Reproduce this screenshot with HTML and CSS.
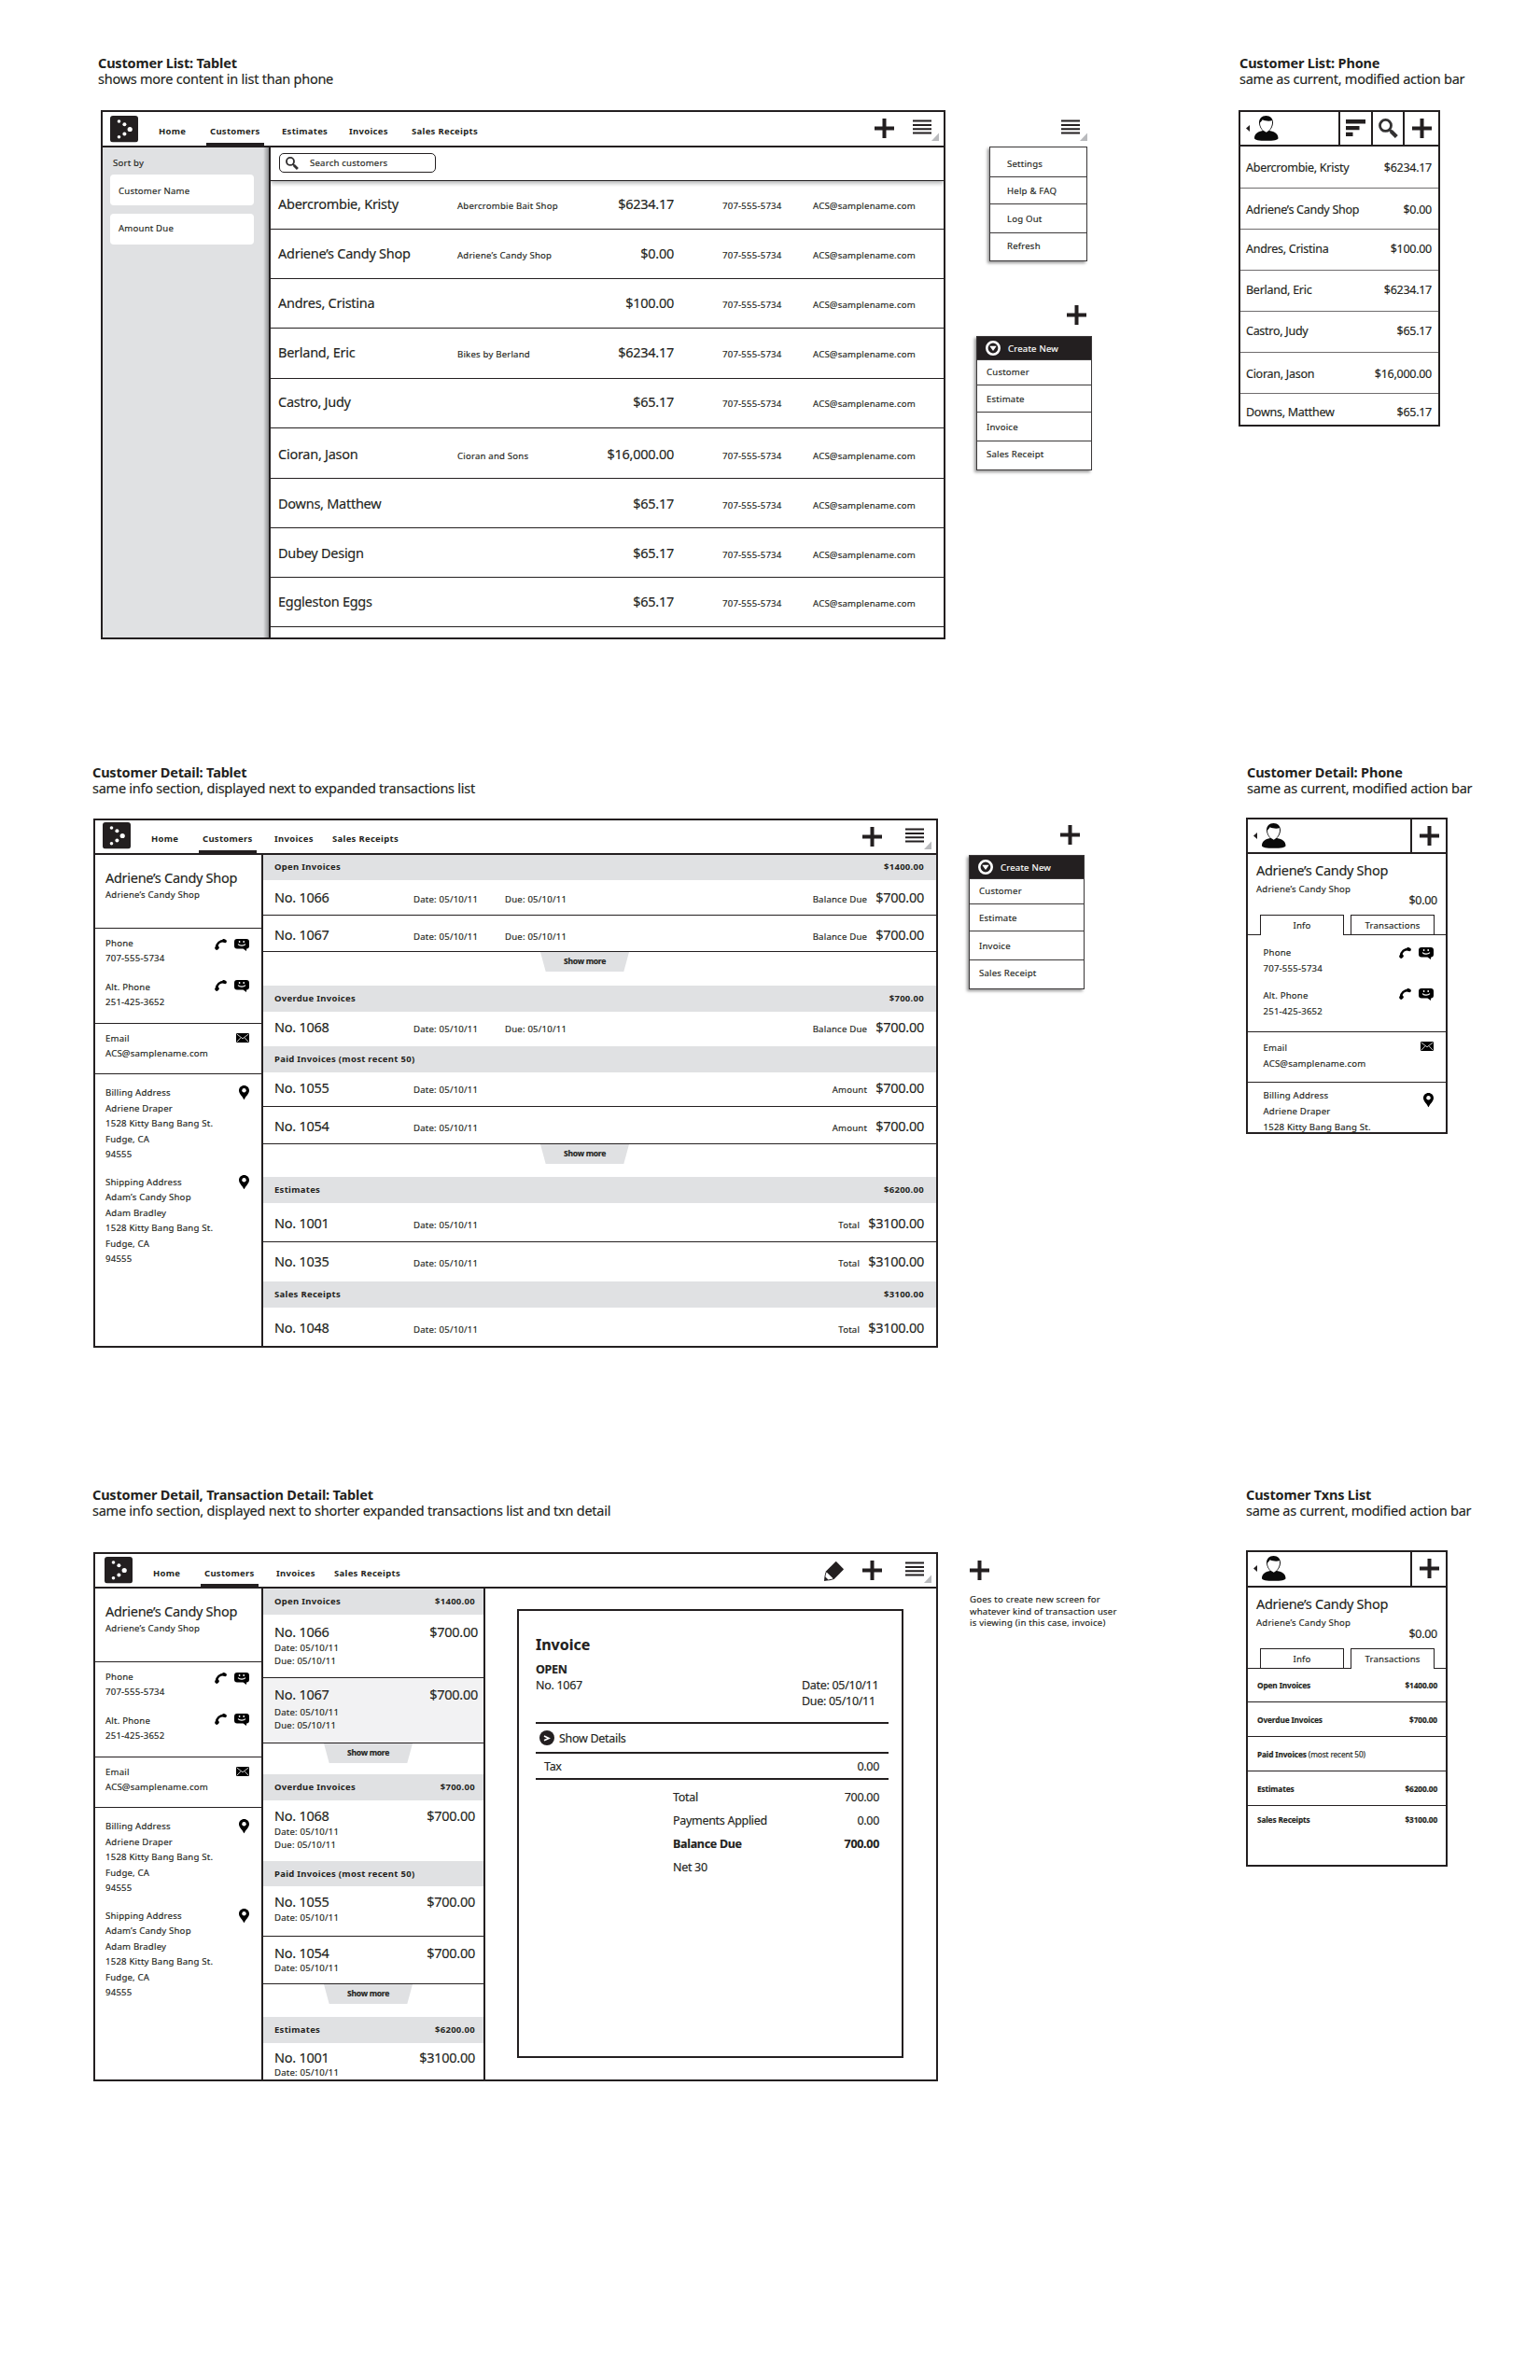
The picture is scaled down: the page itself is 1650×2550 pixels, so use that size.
FILE: index.html
```html
<!DOCTYPE html>
<html lang="en">
<head>
<meta charset="utf-8">
<title>Customer screens: tablet and phone</title>
<link rel="stylesheet" href="styles.css">
</head>
<body>
<svg class="sprite" aria-hidden="true">
  <symbol id="i-logo" viewBox="0 0 30 28.5"><rect width="30" height="28.5" rx="3" fill="#231f20"/><g fill="#fff"><circle cx="9.5" cy="6" r="1.8"/><circle cx="15.4" cy="9.3" r="2"/><circle cx="21.2" cy="14.5" r="2.6"/><circle cx="15.4" cy="19.6" r="2"/><circle cx="9.5" cy="22.7" r="1.8"/></g></symbol>
  <symbol id="i-plus" viewBox="0 0 21 21"><path d="M8.500 0h4v8.500H21v4h-8.500V21h-4v-8.500H0v-4h8.500z" fill="#231f20"/></symbol>
  <symbol id="i-list" viewBox="0 0 28 23"><path d="M0 .500h20v2H0zM0 4.900h20v2H0zM0 9.300h20v2H0zM0 13.600h20v2H0z" fill="#231f20"/><path d="M28 14.500V23h-8z" fill="#b9babd"/></symbol>
  <symbol id="i-search" viewBox="0 0 21 21"><circle cx="7.500" cy="7.400" r="6" fill="none" stroke="#333132" stroke-width="2.800"/><path d="M11.500 11.700l2.500 2.200" stroke="#333132" stroke-width="2.600"/><path d="M13.300 13.400l6 6" stroke="#333132" stroke-width="4.200"/></symbol>
  <symbol id="i-sort" viewBox="0 0 21 18"><path d="M0 0h21v4.500H0zM0 7h14.500v4.200H0zM0 13.700h7.500V18H0z" fill="#231f20"/></symbol>
  <symbol id="i-person" viewBox="0 0 26 27"><path d="M12.500 0C17 0 20 3 20 7.500c0 3.500-2 7-4 8.500 6 1 9.500 3.500 9.500 8 0 2-5 2.800-12.700 2.800S0 26 0 24c0-4.500 3.500-7 9-8-2-1.500-4-5-4-8.500C5 3 8 0 12.500 0z" fill="#0a0a0a"/><path d="M6 7.500C7.300 6.400 8.200 5.300 8.700 4.300c3 1.500 7 1.800 10.300 1 .5 4.400-1 8.200-3.400 10.400l-2.800 2-3.400-2C7.200 13.600 5.900 10.800 6 7.500z" fill="#fff"/></symbol>
  <symbol id="i-back" viewBox="0 0 4 7"><path d="M4 0v7L0 3.500z" fill="#231f20"/></symbol>
  <symbol id="i-call" viewBox="0 0 13 12"><path d="M2 9C2.300 4.800 5.500 2 10 1.900" fill="none" stroke="#000" stroke-width="2.500"/><ellipse cx="2.500" cy="9.500" rx="2.400" ry="2.100" transform="rotate(-50 2.500 9.500)"/><ellipse cx="10.400" cy="2.100" rx="2.500" ry="1.900" transform="rotate(25 10.400 2.100)"/></symbol>
  <symbol id="i-chat" viewBox="0 0 16 13"><path d="M3 0h10a3 3 0 0 1 3 3v4.500a3 3 0 0 1-2.800 3L13 13l-3.500-2.500H3a3 3 0 0 1-3-3V3a3 3 0 0 1 3-3z"/><circle cx="5.600" cy="3" r=".9" fill="#fff"/><circle cx="10.200" cy="3" r=".9" fill="#fff"/><path d="M4 5.700c2 2 6 2 8 0" fill="none" stroke="#fff" stroke-width="1.200"/></symbol>
  <symbol id="i-mail" viewBox="0 0 14 10"><rect width="14" height="10" rx="1.200"/><path d="M1 1.200l6 4.600 6-4.600M1 9l4-4.300M13 9L9 4.700" fill="none" stroke="#fff" stroke-width=".8"/></symbol>
  <symbol id="i-pin" viewBox="0 0 11 15.500"><path d="M5.500 0C2.400 0 0 2.400 0 5.400 0 9 4 11.500 5.500 15.500 7 11.500 11 9 11 5.400 11 2.400 8.600 0 5.500 0z"/><circle cx="5.500" cy="5.200" r="2.200" fill="#fff"/></symbol>
  <symbol id="i-pencil" viewBox="0 0 21 21"><path d="M12 .4q.7-.6 1.400.1l7.100 7.200q.6.700 0 1.400L10.600 19C8.800 19.900 4 20.500 0 21c.3-4 .8-8 2.200-10.700z" fill="#231f20"/><path d="M2.700 11.500l6.900 6.700c-1.800.8-3.600 1-5.200 1.200l-3-2.800c.2-2 .6-4 1.300-5.100z" fill="#fff"/></symbol>
  <symbol id="i-drop" viewBox="0 0 16 16"><circle cx="8" cy="8" r="6.700" fill="#231f20" stroke="#fff" stroke-width="2.600"/><path d="M4.300 5.800h7.400L8 11z" fill="#fff"/></symbol>
  <symbol id="i-expand" viewBox="0 0 16 16"><circle cx="8" cy="8" r="8" fill="#231f20"/><path d="M5 6l5 2.400-5 2.400" fill="none" stroke="#fff" stroke-width="1.700"/></symbol>
</svg>

<section class="board board--list">
  <div class="board__tablet">
    <h2 class="caption">Customer List: Tablet</h2>
    <p class="note">shows more content in list than phone</p>
    <div class="tablet tablet--list">
      <header class="topbar topbar--list">
        <svg class="topbar__logo"><use href="#i-logo"/></svg>
        <nav class="nav"><a class="nav__home">Home</a><a class="nav__customers">Customers</a><a class="nav__estimates">Estimates</a><a class="nav__invoices">Invoices</a><a>Sales Receipts</a></nav>
        <svg class="plus"><use href="#i-plus"/></svg>
        <svg class="list-icon"><use href="#i-list"/></svg>
      </header>
      <div class="tablet__body">
        <aside class="sort">
          <p class="sort__title">Sort by</p>
          <div class="sort__option">Customer Name</div>
          <div class="sort__option">Amount Due</div>
        </aside>
        <main class="customers">
          <div class="search"><div class="search__box"><svg class="search__icon"><use href="#i-search"/></svg>Search customers</div></div>
          <div class="customer"><b>Abercrombie, Kristy</b><span>Abercrombie Bait Shop</span><i>$6234.17</i><span>707-555-5734</span><span>ACS@samplename.com</span></div>
          <div class="customer"><b>Adriene’s Candy Shop</b><span>Adriene’s Candy Shop</span><i>$0.00</i><span>707-555-5734</span><span>ACS@samplename.com</span></div>
          <div class="customer"><b>Andres, Cristina</b><span></span><i>$100.00</i><span>707-555-5734</span><span>ACS@samplename.com</span></div>
          <div class="customer"><b>Berland, Eric</b><span>Bikes by Berland</span><i>$6234.17</i><span>707-555-5734</span><span>ACS@samplename.com</span></div>
          <div class="customer"><b>Castro, Judy</b><span></span><i>$65.17</i><span>707-555-5734</span><span>ACS@samplename.com</span></div>
          <div class="customer"><b>Cioran, Jason</b><span>Cioran and Sons</span><i>$16,000.00</i><span>707-555-5734</span><span>ACS@samplename.com</span></div>
          <div class="customer"><b>Downs, Matthew</b><span></span><i>$65.17</i><span>707-555-5734</span><span>ACS@samplename.com</span></div>
          <div class="customer"><b>Dubey Design</b><span></span><i>$65.17</i><span>707-555-5734</span><span>ACS@samplename.com</span></div>
          <div class="customer"><b>Eggleston Eggs</b><span></span><i>$65.17</i><span>707-555-5734</span><span>ACS@samplename.com</span></div>
        </main>
      </div>
    </div>
  </div>
  <div class="extras extras--list">
    <svg class="list-icon"><use href="#i-list"/></svg>
    <ul class="menu menu--settings"><li>Settings</li><li>Help &amp; FAQ</li><li>Log Out</li><li>Refresh</li></ul>
    <svg class="plus"><use href="#i-plus"/></svg>
    <ul class="menu menu--create"><li class="menu__head"><svg class="round"><use href="#i-drop"/></svg>Create New</li><li>Customer</li><li>Estimate</li><li>Invoice</li><li>Sales Receipt</li></ul>
  </div>
  <div class="board__phone">
    <h2 class="caption">Customer List: Phone</h2>
    <p class="note">same as current, modified action bar</p>
    <div class="phone">
      <header class="actionbar">
        <svg class="back"><use href="#i-back"/></svg><svg class="person"><use href="#i-person"/></svg>
        <span class="action action--sort"><svg><use href="#i-sort"/></svg></span>
        <span class="action action--search"><svg><use href="#i-search"/></svg></span>
        <span class="action action--add"><svg><use href="#i-plus"/></svg></span>
      </header>
      <div class="contacts">
        <div class="contact"><span>Abercrombie, Kristy</span><span>$6234.17</span></div>
        <div class="contact"><span>Adriene’s Candy Shop</span><span>$0.00</span></div>
        <div class="contact"><span>Andres, Cristina</span><span>$100.00</span></div>
        <div class="contact"><span>Berland, Eric</span><span>$6234.17</span></div>
        <div class="contact"><span>Castro, Judy</span><span>$65.17</span></div>
        <div class="contact"><span>Cioran, Jason</span><span>$16,000.00</span></div>
        <div class="contact"><span>Downs, Matthew</span><span>$65.17</span></div>
      </div>
    </div>
  </div>
</section>

<section class="board board--detail">
  <div class="board__tablet">
    <h2 class="caption">Customer Detail: Tablet</h2>
    <p class="note">same info section, displayed next to expanded transactions list</p>
    <div class="tablet tablet--detail">
      <header class="topbar topbar--detail">
        <svg class="topbar__logo"><use href="#i-logo"/></svg>
        <nav class="nav"><a class="nav__home">Home</a><a class="nav__customers">Customers</a><a class="nav__invoices">Invoices</a><a>Sales Receipts</a></nav>
        <svg class="plus"><use href="#i-plus"/></svg>
        <svg class="list-icon"><use href="#i-list"/></svg>
      </header>
      <div class="tablet__body">
        <aside class="info">
          <div class="info__head"><h3>Adriene’s Candy Shop</h3><p>Adriene’s Candy Shop</p></div>
          <div class="info__phones">
            <div class="entry"><p>Phone<br>707-555-5734</p><svg class="call"><use href="#i-call"/></svg><svg class="chat"><use href="#i-chat"/></svg></div>
            <div class="entry"><p>Alt. Phone<br>251-425-3652</p><svg class="call"><use href="#i-call"/></svg><svg class="chat"><use href="#i-chat"/></svg></div>
          </div>
          <div class="info__email">
            <div class="entry"><p>Email<br>ACS@samplename.com</p><svg class="mail"><use href="#i-mail"/></svg></div>
          </div>
          <div class="info__address">
            <div class="entry"><p>Billing Address<br>Adriene Draper<br>1528 Kitty Bang Bang St.<br>Fudge, CA<br>94555</p><svg class="pin"><use href="#i-pin"/></svg></div>
            <div class="entry"><p>Shipping Address<br>Adam’s Candy Shop<br>Adam Bradley<br>1528 Kitty Bang Bang St.<br>Fudge, CA<br>94555</p><svg class="pin"><use href="#i-pin"/></svg></div>
          </div>
        </aside>
        <main class="ledger ledger--wide">
          <div class="group"><span>Open Invoices</span><span>$1400.00</span></div>
          <div class="txn"><b>No. 1066</b><span>Date: 05/10/11</span><span>Due: 05/10/11</span><span>Balance Due</span><b>$700.00</b></div>
          <div class="txn txn--low"><b>No. 1067</b><span>Date: 05/10/11</span><span>Due: 05/10/11</span><span>Balance Due</span><b>$700.00</b></div>
          <div class="more"><span>Show more</span></div>
          <div class="group"><span>Overdue Invoices</span><span>$700.00</span></div>
          <div class="txn txn--last txn--high"><b>No. 1068</b><span>Date: 05/10/11</span><span>Due: 05/10/11</span><span>Balance Due</span><b>$700.00</b></div>
          <div class="group"><span>Paid Invoices (most recent 50)</span></div>
          <div class="txn txn--high"><b>No. 1055</b><span>Date: 05/10/11</span><span></span><span>Amount</span><b>$700.00</b></div>
          <div class="txn txn--low"><b>No. 1054</b><span>Date: 05/10/11</span><span></span><span>Amount</span><b>$700.00</b></div>
          <div class="more"><span>Show more</span></div>
          <div class="group"><span>Estimates</span><span>$6200.00</span></div>
          <div class="txn txn--lower"><b>No. 1001</b><span>Date: 05/10/11</span><span></span><span>Total</span><b>$3100.00</b></div>
          <div class="txn txn--last txn--low"><b>No. 1035</b><span>Date: 05/10/11</span><span></span><span>Total</span><b>$3100.00</b></div>
          <div class="group"><span>Sales Receipts</span><span>$3100.00</span></div>
          <div class="txn txn--last txn--lower"><b>No. 1048</b><span>Date: 05/10/11</span><span></span><span>Total</span><b>$3100.00</b></div>
        </main>
      </div>
    </div>
  </div>
  <div class="extras extras--detail">
    <svg class="plus"><use href="#i-plus"/></svg>
    <ul class="menu menu--create"><li class="menu__head"><svg class="round"><use href="#i-drop"/></svg>Create New</li><li>Customer</li><li>Estimate</li><li>Invoice</li><li>Sales Receipt</li></ul>
  </div>
  <div class="board__phone">
    <h2 class="caption">Customer Detail: Phone</h2>
    <p class="note">same as current, modified action bar</p>
    <div class="phone">
      <header class="actionbar actionbar--tall">
        <svg class="back"><use href="#i-back"/></svg><svg class="person"><use href="#i-person"/></svg>
        <span class="action action--add"><svg><use href="#i-plus"/></svg></span>
      </header>
      <div class="profile"><h3>Adriene’s Candy Shop</h3><p>Adriene’s Candy Shop</p><p class="profile__due">$0.00</p></div>
      <div class="tabs"><span class="tab tab--active">Info</span><span class="tab">Transactions</span></div>
      <div class="details">
        <div class="details__phones">
          <div class="entry"><p>Phone<br>707-555-5734</p><svg class="call"><use href="#i-call"/></svg><svg class="chat"><use href="#i-chat"/></svg></div>
          <div class="entry"><p>Alt. Phone<br>251-425-3652</p><svg class="call"><use href="#i-call"/></svg><svg class="chat"><use href="#i-chat"/></svg></div>
        </div>
        <div class="details__email">
          <div class="entry"><p>Email<br>ACS@samplename.com</p><svg class="mail"><use href="#i-mail"/></svg></div>
        </div>
        <div class="details__address">
          <div class="entry"><p>Billing Address<br>Adriene Draper<br>1528 Kitty Bang Bang St.</p><svg class="pin"><use href="#i-pin"/></svg></div>
        </div>
      </div>
    </div>
  </div>
</section>

<section class="board board--txn">
  <div class="board__tablet">
    <h2 class="caption">Customer Detail, Transaction Detail: Tablet</h2>
    <p class="note">same info section, displayed next to shorter expanded transactions list and txn detail</p>
    <div class="tablet tablet--txn">
      <header class="topbar topbar--txn">
        <svg class="topbar__logo"><use href="#i-logo"/></svg>
        <nav class="nav"><a class="nav__home">Home</a><a class="nav__customers">Customers</a><a class="nav__invoices">Invoices</a><a>Sales Receipts</a></nav>
        <svg class="pencil"><use href="#i-pencil"/></svg>
        <svg class="plus"><use href="#i-plus"/></svg>
        <svg class="list-icon"><use href="#i-list"/></svg>
      </header>
      <div class="tablet__body">
        <aside class="info">
          <div class="info__head"><h3>Adriene’s Candy Shop</h3><p>Adriene’s Candy Shop</p></div>
          <div class="info__phones">
            <div class="entry"><p>Phone<br>707-555-5734</p><svg class="call"><use href="#i-call"/></svg><svg class="chat"><use href="#i-chat"/></svg></div>
            <div class="entry"><p>Alt. Phone<br>251-425-3652</p><svg class="call"><use href="#i-call"/></svg><svg class="chat"><use href="#i-chat"/></svg></div>
          </div>
          <div class="info__email">
            <div class="entry"><p>Email<br>ACS@samplename.com</p><svg class="mail"><use href="#i-mail"/></svg></div>
          </div>
          <div class="info__address">
            <div class="entry"><p>Billing Address<br>Adriene Draper<br>1528 Kitty Bang Bang St.<br>Fudge, CA<br>94555</p><svg class="pin"><use href="#i-pin"/></svg></div>
            <div class="entry"><p>Shipping Address<br>Adam’s Candy Shop<br>Adam Bradley<br>1528 Kitty Bang Bang St.<br>Fudge, CA<br>94555</p><svg class="pin"><use href="#i-pin"/></svg></div>
          </div>
        </aside>
        <div class="ledger ledger--narrow">
          <div class="group"><span>Open Invoices</span><span>$1400.00</span></div>
          <div class="item item--open item--first"><b>No. 1066</b><b>$700.00</b><p>Date: 05/10/11<br>Due: 05/10/11</p></div>
          <div class="item item--open item--selected"><b>No. 1067</b><b>$700.00</b><p>Date: 05/10/11<br>Due: 05/10/11</p></div>
          <div class="more"><span>Show more</span></div>
          <div class="group"><span>Overdue Invoices</span><span>$700.00</span></div>
          <div class="item item--last"><b>No. 1068</b><b>$700.00</b><p>Date: 05/10/11<br>Due: 05/10/11</p></div>
          <div class="group"><span>Paid Invoices (most recent 50)</span></div>
          <div class="item"><b>No. 1055</b><b>$700.00</b><p>Date: 05/10/11</p></div>
          <div class="item item--low"><b>No. 1054</b><b>$700.00</b><p>Date: 05/10/11</p></div>
          <div class="more"><span>Show more</span></div>
          <div class="group"><span>Estimates</span><span>$6200.00</span></div>
          <div class="item item--last item--cut"><b>No. 1001</b><b>$3100.00</b><p>Date: 05/10/11</p></div>
        </div>
        <main class="pane">
          <article class="invoice">
            <h3>Invoice</h3>
            <div class="invoice__meta"><p><strong>OPEN</strong><br>No. 1067</p><p class="invoice__dates">Date: 05/10/11<br>Due: 05/10/11</p></div>
            <div class="invoice__details"><svg class="round"><use href="#i-expand"/></svg>Show Details</div>
            <div class="invoice__tax"><span>Tax</span><span>0.00</span></div>
            <dl class="totals">
              <div><dt>Total</dt><dd>700.00</dd></div>
              <div><dt>Payments Applied</dt><dd>0.00</dd></div>
              <div class="totals__due"><dt>Balance Due</dt><dd>700.00</dd></div>
              <div><dt>Net 30</dt></div>
            </dl>
          </article>
        </main>
      </div>
    </div>
  </div>
  <div class="extras extras--txn">
    <svg class="plus"><use href="#i-plus"/></svg>
    <p>Goes to create new screen for<br>whatever kind of transaction user<br>is viewing (in this case, invoice)</p>
  </div>
  <div class="board__phone">
    <h2 class="caption">Customer Txns List</h2>
    <p class="note">same as current, modified action bar</p>
    <div class="phone">
      <header class="actionbar actionbar--tall">
        <svg class="back"><use href="#i-back"/></svg><svg class="person"><use href="#i-person"/></svg>
        <span class="action action--add"><svg><use href="#i-plus"/></svg></span>
      </header>
      <div class="profile"><h3>Adriene’s Candy Shop</h3><p>Adriene’s Candy Shop</p><p class="profile__due">$0.00</p></div>
      <div class="tabs"><span class="tab">Info</span><span class="tab tab--active">Transactions</span></div>
      <div class="sums">
        <div class="sum"><b>Open Invoices</b><b>$1400.00</b></div>
        <div class="sum"><b>Overdue Invoices</b><b>$700.00</b></div>
        <div class="sum"><span><b>Paid Invoices</b> (most recent 50)</span></div>
        <div class="sum"><b>Estimates</b><b>$6200.00</b></div>
        <div class="sum"><b>Sales Receipts</b><b>$3100.00</b></div>
      </div>
    </div>
  </div>
</section>
</body>
</html>
```
FILE: styles.css
```css
* { box-sizing: border-box; }

body {
  margin: 0;
  width: 1650px;
  height: 2550px;
  overflow: hidden;
  background: #fff;
  color: #231f20;
  font: 9.6px/13px "Noto Sans", "Open Sans", sans-serif;
  letter-spacing: 0.2px;
  -webkit-text-stroke: 0.15px currentColor;
}

h2, h3, p, ul, dl, dd { margin: 0; padding: 0; }
ul { list-style: none; }
svg { display: block; flex: none; }
.sprite { position: absolute; width: 0; height: 0; }

/* Boards: one row per feature, tablet + menus + phone */
.board { display: flex; }
.board--list { height: 760px; padding-left: 105px; }
.board--detail { height: 774px; padding-left: 99px; }
.board--txn { height: 1016px; padding-left: 99px; }
.board__tablet { padding-top: 59px; width: 941px; }
.board--detail .board__tablet, .board--txn .board__tablet { width: 940px; }
.board__phone { padding-top: 59px; }
.board--list .board__phone { margin-left: 158px; }
.board--detail .board__phone { margin-left: 174px; }
.board--txn .board__phone { margin-left: 135px; }

.caption { font-size: 14.5px; line-height: 17px; letter-spacing: -0.18px; -webkit-text-stroke: 0; }
.note { font-size: 14.5px; line-height: 17px; letter-spacing: -0.25px; white-space: nowrap; }

/* Tablet frame */
.tablet { display: flex; flex-direction: column; width: 905px; height: 567px; border: 2px solid #231f20; overflow: hidden; }
.tablet--list { margin: 25px 0 0 3px; }
.tablet--detail { margin: 24px 0 0 1px; }
.tablet--txn { margin: 36px 0 0 1px; }
.tablet__body { display: flex; flex: 1; min-height: 0; }

.topbar { display: flex; flex: none; height: 37px; padding-left: 8px; border-bottom: 2px solid #231f20; }
.topbar--list { height: 38px; }
.topbar--txn { padding-left: 10px; }
.topbar__logo { width: 30px; height: 28.5px; margin-top: 4px; }
.topbar--detail .topbar__logo { margin-top: 2px; }
.topbar--txn .topbar__logo { margin-top: 3px; }
.nav { display: flex; flex: 1; padding-left: 22px; font-size: 9.5px; font-weight: bold; letter-spacing: 0.29px; -webkit-text-stroke: 0; }
.nav a { padding-top: 14px; }
.topbar--detail .nav a { padding-top: 13px; }
.nav__home { width: 55px; }
.nav__customers { position: relative; width: 77px; }
.nav__customers::after { content: ""; position: absolute; left: -4px; bottom: 0; width: 62px; height: 3px; background: #231f20; }
.nav__estimates { width: 72px; }
.nav__invoices { width: 67px; }
.topbar--detail .nav__invoices, .topbar--txn .nav__invoices { width: 62px; }
.plus { width: 21px; height: 21px; }
.list-icon { width: 28px; height: 23px; }
.pencil { width: 21px; height: 21px; margin: 8px 20px 0 0; }
.topbar .plus { margin: 7px 20px 0 0; }
.topbar .list-icon { margin: 8px 5px 0 0; }
.topbar--detail .plus { margin-right: 25px; }
.topbar--txn .plus { margin-right: 25px; }

/* Customer list, tablet */
.sort { width: 180px; padding: 10px 16px 0 8px; border-right: 2px solid #231f20; background: linear-gradient(to right, transparent 172px, #8f9092 178px), #e0e1e3; }
.sort__title { padding-left: 3px; }
.sort__option { height: 33px; margin-top: 6px; padding: 11px 9px 0; border-radius: 4px; background: #fff; }
.sort__option + .sort__option { margin-top: 9px; padding-top: 9px; }
.customers { flex: 1; display: grid; grid-template-rows: 36px 52px 53px 53px 54px 53px 54px 53px 53px 53px; }
.search { padding: 6px 0 0 9px; border-bottom: 1px solid #231f20; box-shadow: 0 2px 5px #a9aaac; clip-path: inset(0 0 -6px 0); }
.search__box { display: flex; align-items: center; width: 168px; height: 21px; border: 1px solid #231f20; border-radius: 5px; padding-left: 6px; }
.search__icon { width: 14px; height: 14px; margin-right: 12px; }
.customer { display: grid; grid-template-columns: 192px 140px 92px 149px 1fr; align-items: baseline; align-content: start; padding: 15px 0 0 8px; border-bottom: 1px solid #231f20; }
.customer:nth-child(2) { padding-top: 14px; }
.customer:nth-child(6) { padding-top: 14px; }
.customer:nth-child(7) { padding-top: 17px; }
.customer:nth-child(8), .customer:nth-child(9) { padding-top: 16px; }
.customer b, .customer i { font-size: 14.5px; line-height: 20px; font-weight: normal; font-style: normal; letter-spacing: -0.26px; }
.customer i { text-align: right; }
.customer i + span { padding-left: 52px; }

/* Pop-up menus beside the tablets */
.extras { display: flex; flex-direction: column; align-items: flex-end; }
.extras--list { width: 124px; padding-top: 128px; }
.extras--list .list-icon { margin-right: 5px; }
.extras--list .plus { margin: 47px 6px 12px 0; }
.extras--detail { width: 123px; padding-top: 124px; }
.extras--detail .plus { margin: 0 5px 11px 0; }
.extras--txn { width: 161px; padding-top: 138px; align-items: flex-start; }
.extras--txn p { margin-top: 15px; line-height: 12.5px; white-space: nowrap; }
.menu { display: grid; border: 1px solid #3b3839; box-shadow: -2px 2px 3px rgba(0, 0, 0, 0.4); background: #fff; }
.menu li { display: flex; align-items: center; border-bottom: 1px solid #3b3839; }
.menu li:last-child { border-bottom: 0; padding-bottom: 3px; }
.menu--settings { width: 105px; margin: 6px 5px 0 0; grid-template-rows: 32px 29px 31px 29px; }
.menu--settings li { padding-left: 18px; }
.menu--settings li:first-child { padding-top: 4px; }
.menu--create { width: 124px; grid-template-rows: 25px 27px 29px 31px 30px; }
.menu--create li { padding-left: 10px; }
.menu--create li:nth-child(2) { padding-bottom: 2px; }
.menu--create .menu__head { padding-left: 9px; background: #231f20; color: #fff; }
.round { width: 16px; height: 16px; margin-right: 8px; }

/* Phone frame */
.phone { width: 216px; height: 339px; margin: 25px 0 0 -1px; border: 2px solid #231f20; overflow: hidden; }
.board--detail .phone { margin-top: 23px; }
.board--txn .phone { margin-top: 34px; margin-left: 0; }
.actionbar { display: flex; height: 37px; border-bottom: 2px solid #231f20; }
.actionbar--tall { height: 38px; }
.board--detail .actionbar { height: 37px; }
.back { width: 4px; height: 7px; margin: 14px 0 0 6px; }
.person { width: 26px; height: 27px; margin: 4px auto 0 5px; }
.action { display: flex; justify-content: center; border-left: 2px solid #231f20; }
.action svg { width: 21px; height: 21px; margin-top: 7px; }
.action--sort { width: 35px; }
.action--sort svg { height: 18px; margin-top: 8px; }
.action--search { width: 34px; }
.action--add { width: 38px; }

.contact { display: flex; justify-content: space-between; height: 44px; padding: 11px 7px 0 6px; border-bottom: 1px solid #6f6c6d; font-size: 12.5px; line-height: 20px; letter-spacing: -0.27px; }
.contact:nth-child(1) { height: 45px; padding-top: 13px; }
.contact:nth-child(2), .contact:nth-child(6) { padding-top: 13px; }
.contact:nth-child(7) { padding-top: 10px; border: 0; }

.profile { padding: 7px 9px 6px 9px; }
.profile h3, .info__head h3 { font-size: 14.5px; line-height: 20px; font-weight: normal; letter-spacing: -0.29px; }
.profile h3 { margin-bottom: 4px; }
.profile__due { margin-top: -3px; text-align: right; font-size: 12.5px; line-height: 18px; letter-spacing: -0.27px; }
.tabs { display: flex; gap: 7px; height: 22px; padding: 0 12px 0 13px; border-bottom: 1px solid #231f20; }
.tab { flex: 1; padding-top: 4px; text-align: center; border: 1px solid #231f20; border-bottom: 0; background: #fff; }
.tab--active { margin-bottom: -1px; }

/* Contact entries */
.entry { display: flex; align-items: flex-start; }
.entry p { flex: 1; white-space: nowrap; }
.call { width: 13px; height: 12px; margin: 3px 8px 0 0; }
.chat { width: 16px; height: 13px; margin-top: 3px; }
.entry + .entry .call, .entry + .entry .chat { margin-top: 1px; }
.mail { width: 14px; height: 10px; margin-top: 2px; }
.pin { width: 11px; height: 15.5px; }

.info { width: 180px; border-right: 2px solid #231f20; line-height: 16.5px; }
.info > div { padding: 7.5px 13px 0 11px; border-bottom: 1px solid #231f20; }
.info > .info__head { height: 79px; padding-top: 14px; }
.info__head p { margin-top: 1px; }
.info__phones { height: 102px; }
.info__phones .entry + .entry { margin-top: 14px; }
.info__phones .entry + .entry svg { margin-top: 0; }
.info__email { height: 54px; }
.info > .info__address { padding-top: 12px; border-bottom: 0; }
.info__address .entry + .entry { margin-top: 13px; }

.details { line-height: 17px; }
.details > div { padding: 10px 13px 0 16.5px; border-bottom: 1px solid #231f20; }
.details__phones { height: 104px; }
.details__phones .entry + .entry { margin-top: 12px; }
.details > .details__email { height: 54px; padding-top: 8px; }
.details > .details__address { padding-top: 5px; }
.details__address .pin { margin-top: 6px; }

.sums { font-size: 8.3px; line-height: 11px; letter-spacing: -0.13px; }
.sum { display: flex; justify-content: space-between; height: 37px; padding: 13px 9px 0 10px; border-bottom: 1px solid #231f20; }
.sum:first-child { height: 36px; padding-top: 12px; }
.sum:last-child { padding-top: 9px; border: 0; }

/* Transaction ledger */
.ledger { display: grid; flex: 1; align-content: start; }
.group { display: flex; justify-content: space-between; padding: 7px 13px 0 12px; background: #e0e1e3; font-size: 9.5px; font-weight: bold; letter-spacing: 0.29px; -webkit-text-stroke: 0; }
.more { display: flex; }
.more span { width: 95px; height: 21px; padding-top: 4px; background: #e0e1e3; clip-path: polygon(0 0, 100% 0, 94% 100%, 6% 100%); text-align: center; font-size: 8.6px; line-height: 13px; font-weight: bold; letter-spacing: -0.3px; }
.ledger b { font-size: 14.5px; line-height: 20px; font-weight: normal; letter-spacing: -0.26px; }

.ledger--wide { grid-template-rows: 27px 38px 39px 36px 28px 37px 28px 37px 40px 35px 28px 42px 42px 28px 41px; }
.ledger--wide .more { padding-left: 297px; }
.ledger--wide .group:first-child { padding-top: 6px; }
.txn { display: grid; grid-template-columns: 149px 98px 150px 1fr auto; align-items: baseline; align-content: start; padding: 8px 13px 0 12px; border-bottom: 1px solid #231f20; }
.txn--low { padding-top: 10px; }
.txn--lower { padding-top: 11px; }
.txn--high { padding-top: 6px; }
.txn--last { border-bottom: 0; }
.txn span:nth-child(4) { text-align: right; padding-right: 9px; }

.ledger--narrow { flex: none; width: 238px; border-right: 2px solid #231f20; grid-template-rows: 28px 68px 70px 33px 28px 65px 27px 54px 51px 35px 28px 39px; }
.ledger--narrow .group { padding-right: 9px; }
.ledger--narrow .more { padding-left: 65px; }
.item { display: grid; grid-template-columns: 1fr auto; align-content: start; padding: 6px 9px 0 12px; border-bottom: 1px solid #231f20; }
.item p { grid-column: 1 / 3; margin-top: 1px; line-height: 13.5px; }
.item--open { padding-right: 6px; }
.item--first { padding-top: 8px; }
.item--low { padding-top: 7px; }
.item--low p { margin-top: 0; }
.item--selected { padding-top: 7px; background: #f2f2f3; }
.item--selected p { margin-top: 3px; }
.item--last { border-bottom: 0; }
.item--cut { padding-top: 5px; }
.item--cut p { margin-top: 0; }

/* Invoice detail */
.pane { flex: 1; padding: 22px 0 0 34px; }
.invoice { width: 414px; height: 481px; padding: 25px 14px 0 18px; border: 2px solid #231f20; font-size: 12.5px; line-height: 17px; letter-spacing: -0.3px; }
.invoice h3 { font-size: 16px; line-height: 22px; letter-spacing: 0; margin-bottom: 7px; }
.invoice__meta { display: flex; justify-content: space-between; margin-bottom: 14px; }
.invoice__dates { width: 93px; padding-top: 17px; }
.invoice__details { display: flex; align-items: center; height: 34px; padding-left: 4px; border: solid #231f20; border-width: 2px 0; }
.invoice__details .round { margin-right: 5px; }
.invoice__tax { display: flex; align-items: center; justify-content: space-between; height: 28px; padding: 0 10px 0 9px; border-bottom: 2px solid #231f20; }
.totals { margin: 6px 10px 0 147px; line-height: 25px; }
.totals div { display: flex; justify-content: space-between; }
.totals__due { font-weight: bold; }
```
